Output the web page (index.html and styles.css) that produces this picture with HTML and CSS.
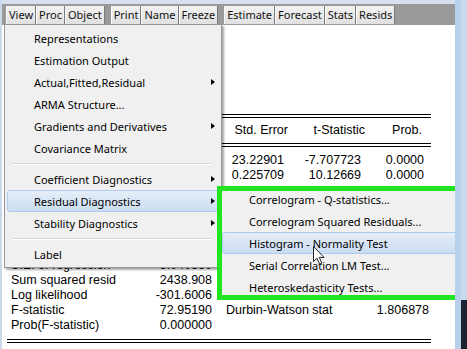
FILE: index.html
```html
<!DOCTYPE html>
<html lang="en">
<head>
    <meta charset="UTF-8">
    <title>Equation: EQ01</title>
    <link rel="stylesheet" href="styles.css">
</head>
<body>
    <div class="window">
        <div class="titlebar"></div>
        <div class="toolbar">
            <div class="group">
                <span class="btn">View</span><span class="btn">Proc</span><span class="btn">Object</span>
            </div>
            <div class="group">
                <span class="btn">Print</span><span class="btn">Name</span><span class="btn">Freeze</span>
            </div>
            <div class="group">
                <span class="btn">Estimate</span><span class="btn">Forecast</span><span class="btn">Stats</span><span class="btn">Resids</span>
            </div>
        </div>

        <div class="report">
            <div class="rule"></div>
            <div class="coef th">
                <span></span><span></span><span>Std. Error</span><span>t-Statistic</span><span class="prob">Prob.</span>
            </div>
            <div class="rule"></div>
            <div class="coef rows">
                <span></span><span></span><span>23.22901</span><span>-7.707723</span><span>0.0000</span>
                <span></span><span></span><span>0.225709</span><span>10.12669</span><span>0.0000</span>
            </div>
            <div class="stats">
                <span>S.E. of regression</span><span class="v">5.040560</span><span></span><span class="v"></span>
                <span>Sum squared resid</span><span class="v">2438.908</span><span></span><span class="v"></span>
                <span>Log likelihood</span><span class="v">-301.6006</span><span></span><span class="v"></span>
                <span>F-statistic</span><span class="v">72.95190</span><span class="l2">Durbin-Watson stat</span><span class="v">1.806878</span>
                <span>Prob(F-statistic)</span><span class="v">0.000000</span><span></span><span class="v"></span>
            </div>
            <div class="rule"></div>
        </div>

        <div class="menu main">
            <div class="item">Representations</div>
            <div class="item">Estimation Output</div>
            <div class="item sub">Actual,Fitted,Residual</div>
            <div class="item">ARMA Structure...</div>
            <div class="item sub">Gradients and Derivatives</div>
            <div class="item">Covariance Matrix</div>
            <div class="sep"></div>
            <div class="item sub">Coefficient Diagnostics</div>
            <div class="item sub active">Residual Diagnostics</div>
            <div class="item sub">Stability Diagnostics</div>
            <div class="sep"></div>
            <div class="item">Label</div>
        </div>

        <div class="menu submenu">
            <div class="item">Correlogram - Q-statistics...</div>
            <div class="item">Correlogram Squared Residuals...</div>
            <div class="item active">Histogram - Normality Test</div>
            <div class="item">Serial Correlation LM Test...</div>
            <div class="item">Heteroskedasticity Tests...</div>
        </div>

        <svg class="cursor" width="13" height="20" viewBox="0 0 13 20">
            <path d="M0.5 0.5 L0.5 15.5 L4 12.2 L6.6 18.2 L8.8 17.2 L6.3 11.4 L11 11.4 Z" fill="#fff" stroke="#222" stroke-width="1"/>
        </svg>
    </div>
</body>
</html>
```

FILE: styles.css
```css
body {
    margin: 0;
    background: linear-gradient(#c6d9ee 300px, #1c2230 300px);
    height: 349px;
}
.window {
    position: relative;
    width: 453px;
    height: 349px;
    background: #fff;
    border-left: 2px solid #c9d9ea;
    border-right: 6px solid #b8d0ea;
    overflow: hidden;
}
.titlebar {
    height: 4px;
    background: #d6e1ed;
}
.toolbar {
    display: flex;
    gap: 6px;
    height: 21px;
    padding-left: 4px;
    background: #9a9a9a;
    font: 11px "Noto Sans", "Open Sans", sans-serif;
}
.group {
    display: flex;
    padding-top: 2px;
}
.btn {
    height: 18px;
    line-height: 17px;
    padding: 0 2px;
    background: linear-gradient(#f2f2f2, #e0e0e0);
    border-left: 1px solid #fafafa;
    border-right: 1px solid #7a7a7a;
    color: #111;
}

/* estimation output behind the menus */
.report {
    width: 424px;
    margin-left: 5px;
    padding-top: 89px;
    font: 12.5px/15px "Liberation Sans", Arial, sans-serif;
    color: #000;
}
.rule {
    height: 2px;
    border-top: 1px solid #000;
    border-bottom: 1px solid #000;
}
.coef {
    display: grid;
    grid-template-columns: 110px 90px 77px 77px 63px;
    padding-left: 4px;
    text-align: right;
}
.coef.th {
    line-height: 25px;
}
.coef.th .prob {
    padding-right: 6px;
}
.coef.rows {
    padding: 6px 0 0;
    margin-bottom: 75px;
}
.stats {
    display: grid;
    grid-template-columns: 120px 81px 134px 83px;
    padding-left: 4px;
    padding-bottom: 6px;
}
.stats .v {
    text-align: right;
}
.stats .l2 {
    padding-left: 14px;
}

/* menus */
.menu {
    position: absolute;
    background: #f0f0f0;
    font: 11px "Noto Sans", "Open Sans", sans-serif;
    color: #000;
}
.menu .item {
    position: relative;
    height: 22px;
    line-height: 21px;
    border: 1px solid transparent;
    box-sizing: border-box;
}
.menu .item.sub::after {
    content: "";
    position: absolute;
    right: 3px;
    top: 7px;
    border-left: 4px solid #000;
    border-top: 3.5px solid transparent;
    border-bottom: 3.5px solid transparent;
}
.menu .item.active {
    background: linear-gradient(#e6eef8, #cbdcf1);
    border-color: #aecaee;
    border-radius: 3px;
}
.main {
    left: 2px;
    top: 24px;
    width: 212px;
    padding: 2px;
    border: 1px solid #979797;
    box-shadow: 2px 2px 2px rgba(0, 0, 0, 0.35);
}
.main .item {
    padding-left: 26px;
}
.sep {
    height: 9px;
    margin: 0 8px 0 4px;
    background: linear-gradient(transparent 4px, #d7d7d7 4px, #d7d7d7 5px, #fff 5px, #fff 6px, transparent 6px);
}
.submenu {
    left: 217px;
    top: 188px;
    width: 244px;
    padding: 0 3px;
    box-sizing: border-box;
    outline: 5px solid #22e522;
    outline-offset: -3px;
}
.submenu .item {
    padding-left: 26px;
}
.cursor {
    position: absolute;
    left: 311px;
    top: 246px;
}
```
